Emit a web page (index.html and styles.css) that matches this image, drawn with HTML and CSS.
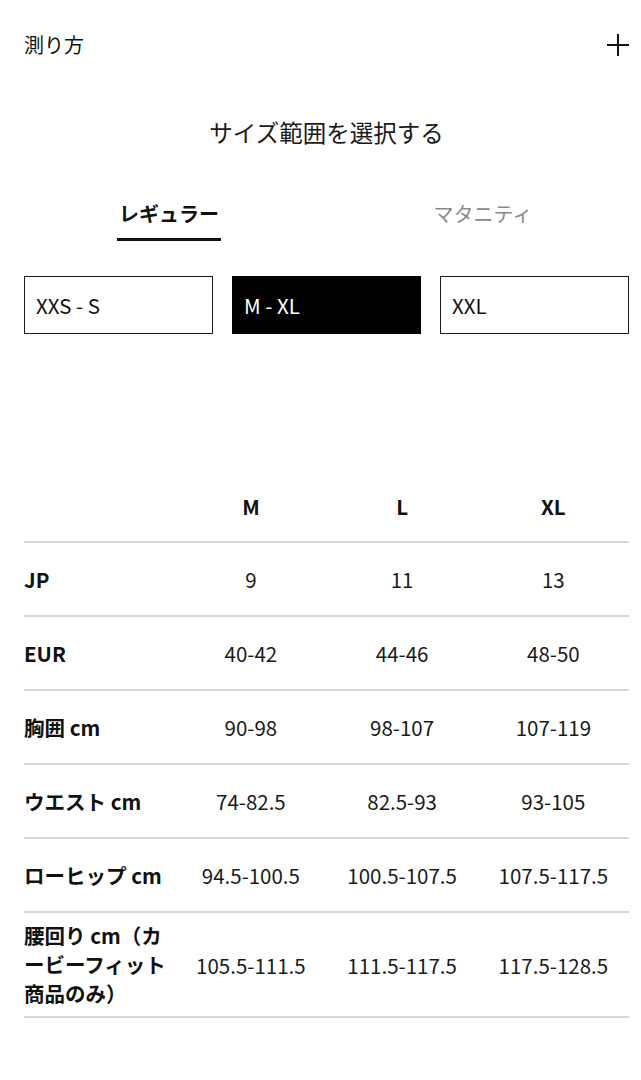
FILE: index.html
```html
<!DOCTYPE html>
<html lang="ja">
<head>
<meta charset="utf-8">
<link rel="stylesheet" href="styles.css">
</head>
<body>
<div class="page">
  <div class="top">
    <span class="top-label">測り方</span>
    <svg class="plus" width="24" height="24" viewBox="0 0 24 24"><path d="M12 1v22M1 12h22" stroke="#111" stroke-width="2" fill="none"/></svg>
  </div>
  <h1 class="title">サイズ範囲を選択する</h1>
  <div class="tabs">
    <div class="tab"><span class="tab-text active">レギュラー</span></div>
    <div class="tab"><span class="tab-text muted">マタニティ</span></div>
  </div>
  <div class="ranges">
    <div class="range">XXS - S</div>
    <div class="range selected">M - XL</div>
    <div class="range">XXL</div>
  </div>
  <table class="sizes">
    <thead>
      <tr><th></th><th>M</th><th>L</th><th>XL</th></tr>
    </thead>
    <tbody>
      <tr><th>JP</th><td>9</td><td>11</td><td>13</td></tr>
      <tr><th>EUR</th><td>40-42</td><td>44-46</td><td>48-50</td></tr>
      <tr><th>胸囲 cm</th><td>90-98</td><td>98-107</td><td>107-119</td></tr>
      <tr><th>ウエスト cm</th><td>74-82.5</td><td>82.5-93</td><td>93-105</td></tr>
      <tr><th>ローヒップ cm</th><td>94.5-100.5</td><td>100.5-107.5</td><td>107.5-117.5</td></tr>
      <tr class="tall"><th>腰回り cm（カ<br>ービーフィット<br>商品のみ）</th><td>105.5-111.5</td><td>111.5-117.5</td><td>117.5-128.5</td></tr>
    </tbody>
  </table>
</div>
</body>
</html>
```
FILE: styles.css
```css
* { box-sizing: border-box; }
html, body { margin: 0; padding: 0; background: #fff; }
body {
  font-family: "Noto Sans CJK JP", "Noto Sans", sans-serif;
  color: #111;
}
.page { padding: 0 12px 0 24px; }
.top {
  height: 90px;
  display: flex;
  align-items: center;
  justify-content: space-between;
}
.top-label { font-size: 20px; line-height: 28px; }
.plus { display: block; margin-right: -1px; }
.title {
  margin: 26px 0 0;
  font-size: 23.5px;
  line-height: 32px;
  font-weight: 400;
  text-align: center;
  color: #1a1a1a;
}
.tabs {
  display: grid;
  grid-template-columns: 1fr 1fr;
  margin: 52px -11px 0 -12px;
}
.tab { text-align: center; }
.tab-text {
  display: inline-block;
  font-size: 20px;
  line-height: 28px;
  padding-bottom: 10px;
  border-bottom: 3px solid transparent;
}
.tab-text.active { font-weight: 700; border-bottom-color: #111; padding-left: 2px; padding-right: 2px; }
.tab-text.muted { color: #8a8a8a; }
.ranges {
  display: grid;
  grid-template-columns: repeat(3, 1fr);
  gap: 19px;
  margin-top: 35px;
}
.range {
  height: 58px;
  border: 1.5px solid #1a1a1a;
  display: flex;
  align-items: center;
  padding-left: 11px;
  font-size: 20.5px;
  color: #111;
}
.range.selected { background: #000; color: #fff; border-color: #000; }
.sizes {
  width: 100%;
  margin-top: 136px;
  border-collapse: collapse;
  table-layout: fixed;
  font-size: 20.5px;
}
.sizes th, .sizes td { padding: 0; vertical-align: middle; }
.sizes thead th {
  height: 72px;
  font-weight: 700;
  text-align: center;
  border-bottom: 2px solid #d6d6d6;
}
.sizes tbody tr { border-bottom: 2px solid #d6d6d6; }
.sizes tbody th {
  height: 74px;
  text-align: left;
  font-weight: 700;
  line-height: 29px;
  white-space: nowrap;
}
.sizes td { text-align: center; color: #1a1a1a; }
.sizes tr.tall th { height: 105px; }
```
